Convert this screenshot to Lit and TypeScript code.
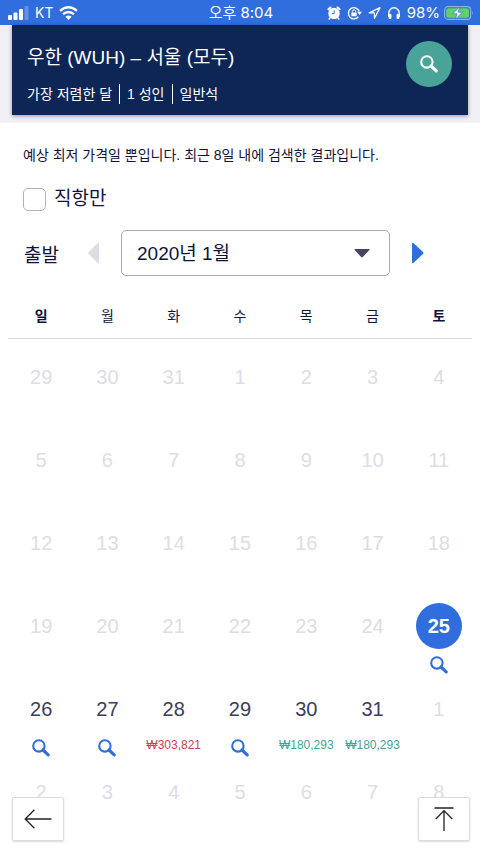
import { LitElement, html, css, nothing } from "lit";
import { customElement, property } from "lit/decorators.js";
import { classMap } from "lit/directives/class-map.js";

type Price = { text: string; level: "high" | "low" };
type Day = {
  date: number;
  state: "muted" | "open" | "selected";
  price?: Price;
  search?: boolean;
};

const WEEKDAYS = ["일", "월", "화", "수", "목", "금", "토"];

const muted = (...dates: number[]): Day[] =>
  dates.map((date) => ({ date, state: "muted" }));

const WEEKS: Day[][] = [
  muted(29, 30, 31, 1, 2, 3, 4),
  muted(5, 6, 7, 8, 9, 10, 11),
  muted(12, 13, 14, 15, 16, 17, 18),
  [...muted(19, 20, 21, 22, 23, 24), { date: 25, state: "selected", search: true }],
  [
    { date: 26, state: "open", search: true },
    { date: 27, state: "open", search: true },
    { date: 28, state: "open", price: { text: "₩303,821", level: "high" } },
    { date: 29, state: "open", search: true },
    { date: 30, state: "open", price: { text: "₩180,293", level: "low" } },
    { date: 31, state: "open", price: { text: "₩180,293", level: "low" } },
    ...muted(1),
  ],
  muted(2, 3, 4, 5, 6, 7, 8),
];

const magnifier = html`<svg class="glass" viewBox="0 0 18 18" width="18" height="18" aria-hidden="true">
  <circle cx="6.9" cy="6.9" r="5.7" fill="none" stroke="currentColor" stroke-width="2.1" />
  <path d="M11 11 L16.2 15.9" stroke="currentColor" stroke-width="3.1" stroke-linecap="round" />
</svg>`;

@customElement("status-bar")
export class StatusBar extends LitElement {
  static styles = css`
    :host {
      display: grid;
      grid-template-columns: 1fr auto 1fr;
      align-items: center;
      height: 25px;
      padding: 0 6px 0 8px;
      background: #2f6edc;
      color: #fff;
      font-family: Inter, "Noto Sans CJK KR", sans-serif;
      font-size: 15px;
      line-height: 25px;
    }
    .side {
      display: flex;
      align-items: center;
      gap: 6px;
    }
    .end {
      justify-content: flex-end;
    }
    .power {
      display: flex;
      align-items: center;
      gap: 4px;
    }
    .carrier {
      font-size: 14px;
    }
    svg {
      display: block;
      flex: none;
    }
  `;

  render() {
    return html`
      <div class="side">
        <svg width="21" height="14" viewBox="0 0 21 14" fill="#fff" aria-hidden="true">
          <rect x="0" y="9" width="4" height="5" rx="1" />
          <rect x="5.5" y="6.5" width="4" height="7.5" rx="1" />
          <rect x="11" y="3" width="4" height="11" rx="1" />
          <rect x="16.5" y="0" width="4" height="14" rx="1" opacity=".25" />
        </svg>
        <span class="carrier">KT</span>
        <svg width="19" height="14" viewBox="0 0 19 14" aria-hidden="true">
          <g fill="none" stroke="#fff" stroke-width="2.4">
            <path d="M1 4.9 Q9.5 -2.3 18 4.9" />
            <path d="M4 8.2 Q9.5 3.6 15 8.2" />
          </g>
          <path d="M9.5 14 L6.4 10.8 Q9.5 8.4 12.6 10.8 Z" fill="#fff" />
        </svg>
      </div>
      <span>오후 8:04</span>
      <div class="side end">
        <svg width="14" height="14" viewBox="0 0 14 14" aria-hidden="true">
          <g stroke="#fff" stroke-linecap="round" fill="none">
            <path d="M1.4 3.2 L3.4 1.4 M12.6 3.2 L10.6 1.4" stroke-width="2" />
            <path d="M3.4 11.6 L2.2 13 M10.6 11.6 L11.8 13" stroke-width="1.6" />
          </g>
          <circle cx="7" cy="7.4" r="5.7" fill="#fff" />
          <path d="M7.2 4.2 V7.6 H4.6" fill="none" stroke="#2f6edc" stroke-width="1" />
        </svg>
        <svg width="15" height="14" viewBox="0 0 15 14" aria-hidden="true">
          <path d="M12.3 5.4 A5.6 5.6 0 1 0 11.4 10.8" fill="none" stroke="#fff" stroke-width="1.4" />
          <path d="M10 5.8 H15 L12.6 9 Z" fill="#fff" />
          <rect x="4.3" y="6.4" width="5.4" height="3.8" rx=".6" fill="#fff" />
          <path d="M5.4 6.6 V5.4 A1.6 1.6 0 0 1 8.6 5.4 V6.6" fill="none" stroke="#fff" stroke-width="1" />
        </svg>
        <svg width="13" height="14" viewBox="0 0 13 14" aria-hidden="true">
          <path d="M12 1.6 L1.2 6.9 H6.4 V12.4 Z" fill="none" stroke="#fff" stroke-width="1.2" stroke-linejoin="round" />
        </svg>
        <svg width="14" height="14" viewBox="0 0 14 14" aria-hidden="true">
          <path d="M1.7 11 V7.4 A5.3 5.6 0 0 1 12.3 7.4 V11" fill="none" stroke="#fff" stroke-width="1.4" />
          <rect x="1.6" y="7.8" width="2.8" height="5.2" rx="1" fill="#fff" />
          <rect x="9.6" y="7.8" width="2.8" height="5.2" rx="1" fill="#fff" />
        </svg>
        <div class="power">
          <span>98%</span>
          <svg width="30" height="14" viewBox="0 0 30 14" aria-hidden="true">
            <rect x=".6" y=".6" width="26" height="12.8" rx="3.4" fill="none" stroke="#8fb2ee" stroke-width="1.1" />
            <path d="M28.2 4.8 Q29.8 7 28.2 9.2 Z" fill="#8fb2ee" />
            <rect x="2.2" y="2.2" width="22.8" height="9.6" rx="2" fill="#62d06a" />
            <path d="M15.6 .8 L8.6 7.8 H13 L11.4 13.2 L18.6 6.2 H14.2 Z" fill="#fff" stroke="#2f6edc" stroke-width=".7" />
          </svg>
        </div>
      </div>
    `;
  }
}

@customElement("trip-summary")
export class TripSummary extends LitElement {
  static styles = css`
    :host {
      display: block;
      padding: 0 12px 8px;
      background: #f0f0f6;
    }
    .card {
      display: flex;
      align-items: flex-start;
      justify-content: space-between;
      padding: 16px 16px 10px 15px;
      background: #0e2656;
      color: #fff;
      box-shadow: 0 1px 4px rgba(0, 0, 0, 0.4);
    }
    .route {
      margin: 0;
      font-size: 19px;
      font-weight: 400;
      line-height: 34px;
    }
    .facts {
      display: flex;
      align-items: center;
      margin: 8px 0 0;
      padding: 0;
      list-style: none;
      font-size: 14px;
      line-height: 22px;
    }
    .fact + .fact {
      margin-left: 7px;
      padding-left: 7px;
      border-left: 1px solid #fff;
      line-height: 20px;
    }
    .search {
      display: grid;
      place-items: center;
      width: 46px;
      height: 46px;
      padding: 0;
      border: 0;
      border-radius: 50%;
      background: #4aa399;
      color: #fff;
    }
  `;

  render() {
    return html`
      <header class="card">
        <div>
          <h1 class="route">우한 (WUH) – 서울 (모두)</h1>
          <ul class="facts">
            <li class="fact">가장 저렴한 달</li>
            <li class="fact">1 성인</li>
            <li class="fact">일반석</li>
          </ul>
        </div>
        <button class="search" aria-label="검색">${magnifier}</button>
      </header>
    `;
  }
}

@customElement("price-calendar")
export class PriceCalendar extends LitElement {
  @property({ attribute: false }) weeks: Day[][] = WEEKS;

  static styles = css`
    :host {
      display: block;
      padding: 0 8px;
    }
    .grid {
      width: 100%;
      table-layout: fixed;
      border-collapse: separate;
      border-spacing: 0;
    }
    .weekday {
      height: 45px;
      padding: 0;
      border-bottom: 1px solid #d9d9e2;
      font-size: 14px;
      font-weight: 400;
      line-height: 20px;
    }
    .weekend {
      font-weight: 700;
    }
    .weeks::before {
      content: "";
      display: block;
      height: 9px;
    }
    .cell {
      height: 83px;
      padding: 6px 0 0;
      box-sizing: border-box;
      vertical-align: top;
    }
    .day {
      display: flex;
      flex-direction: column;
      align-items: center;
      width: 100%;
      padding: 0;
      border: 0;
      background: none;
      color: #3d3d5c;
      font: inherit;
    }
    .muted {
      color: #dddde5;
    }
    .date {
      width: 46px;
      border-radius: 50%;
      font-size: 20px;
      line-height: 46px;
      text-align: center;
    }
    .selected .date {
      background: #2f6edc;
      color: #fff;
      font-weight: 700;
    }
    .glass {
      display: block;
      margin-top: 7px;
      color: #2f6edc;
    }
    .price {
      margin-top: 4px;
      font-size: 12px;
      line-height: 18px;
    }
    .high {
      color: #c94259;
    }
    .low {
      color: #41a593;
    }
  `;

  private renderDay(day: Day) {
    return html`<td class="cell">
      <button
        class=${classMap({ day: true, [day.state]: true })}
        ?disabled=${day.state === "muted"}
      >
        <span class="date">${day.date}</span>
        ${day.search ? magnifier : nothing}
        ${day.price
          ? html`<span class=${classMap({ price: true, [day.price.level]: true })}>${day.price.text}</span>`
          : nothing}
      </button>
    </td>`;
  }

  render() {
    return html`
      <table class="grid">
        <thead>
          <tr>
            ${WEEKDAYS.map(
              (name, i) =>
                html`<th scope="col" class=${classMap({ weekday: true, weekend: i % 6 === 0 })}>${name}</th>`
            )}
          </tr>
        </thead>
        <tbody class="weeks">
          ${this.weeks.map((week) => html`<tr>${week.map((day) => this.renderDay(day))}</tr>`)}
        </tbody>
      </table>
    `;
  }
}

@customElement("app-root")
export class AppRoot extends LitElement {
  static styles = css`
    :host {
      display: block;
      min-height: 100vh;
      box-sizing: border-box;
      padding-bottom: 8px;
      background: #fff;
      color: #12123a;
      font-family: "Liberation Sans", "Noto Sans CJK KR", sans-serif;
    }
    .notice {
      margin: 0;
      padding: 21px 23px 0;
      font-size: 14px;
      line-height: 22px;
    }
    .direct {
      display: flex;
      align-items: center;
      gap: 8px;
      width: fit-content;
      margin: 19px 23px 0;
      font-size: 19px;
      line-height: 28px;
    }
    .tick {
      width: 23px;
      height: 23px;
      margin: 0;
      appearance: none;
      border: 1px solid #b2b2bf;
      border-radius: 5px;
      background: #fff;
    }
    .month-row {
      display: flex;
      align-items: center;
      margin-top: 17px;
      padding: 0 56px 0 24px;
      font-size: 19px;
    }
    .label {
      flex: none;
      width: 64px;
    }
    .step {
      flex: none;
      padding: 0;
      border: 0;
      background: none;
      color: #2f6edc;
    }
    .step:disabled {
      color: #dddde5;
    }
    .step svg {
      display: block;
    }
    .picker {
      position: relative;
      flex: 1;
      margin: 0 22px;
    }
    .select {
      display: block;
      width: 100%;
      height: 46px;
      padding: 0 48px 0 15px;
      appearance: none;
      border: 1px solid #a9a9b8;
      border-radius: 5px;
      background: #fff;
      color: inherit;
      font: inherit;
    }
    .caret {
      position: absolute;
      top: 19px;
      right: 20px;
      pointer-events: none;
    }
    .calendar {
      margin-top: 17px;
    }
    .float {
      position: fixed;
      bottom: 13px;
      display: grid;
      place-items: center;
      width: 52px;
      height: 44px;
      padding: 0;
      border: 1px solid #dcdcdc;
      border-radius: 2px;
      background: #fff;
      box-shadow: 0 1px 2px rgba(0, 0, 0, 0.15);
    }
    .back {
      left: 12px;
    }
    .top {
      right: 10px;
    }
  `;

  render() {
    return html`
      <status-bar></status-bar>
      <trip-summary></trip-summary>
      <main>
        <p class="notice">예상 최저 가격일 뿐입니다. 최근 8일 내에 검색한 결과입니다.</p>
        <label class="direct"><input class="tick" type="checkbox" />직항만</label>
        <div class="month-row">
          <label class="label" for="month">출발</label>
          <button class="step" disabled aria-label="이전 달">
            <svg width="11" height="22" viewBox="0 0 11 22" aria-hidden="true">
              <path d="M11 1.4 V20.6 Q10.6 21.8 9.6 21 L.6 11.9 Q-.1 11 .6 10.1 L9.6 1 Q10.6 .2 11 1.4 Z" fill="currentColor" />
            </svg>
          </button>
          <div class="picker">
            <select class="select" id="month">
              <option>2020년 1월</option>
            </select>
            <svg class="caret" width="16" height="9" viewBox="0 0 16 9" aria-hidden="true">
              <path d="M1 0 H15 Q16 .2 15.4 1 L8.8 8 Q8 8.8 7.2 8 L.6 1 Q0 .2 1 0 Z" fill="#45455f" />
            </svg>
          </div>
          <button class="step" aria-label="다음 달">
            <svg width="12" height="22" viewBox="0 0 12 22" aria-hidden="true">
              <path d="M0 1.4 V20.6 Q.4 21.8 1.4 21 L11 11.9 Q11.8 11 11 10.1 L1.4 1 Q.4 .2 0 1.4 Z" fill="currentColor" />
            </svg>
          </button>
        </div>
        <price-calendar class="calendar"></price-calendar>
      </main>
      <button class="float back" aria-label="뒤로">
        <svg width="28" height="20" viewBox="0 0 28 20" fill="none" stroke="#222" stroke-width="1.3" aria-hidden="true">
          <path d="M27.5 10 H1.2 M10.4 .8 L1.2 10 L10.4 19.2" />
        </svg>
      </button>
      <button class="float top" aria-label="맨 위로">
        <svg width="20" height="24" viewBox="0 0 20 24" fill="none" stroke="#222" stroke-width="1.3" aria-hidden="true">
          <path d="M.5 1 H19.5 M10 24 V3.6 M1.8 12 L10 3.6 L18.2 12" />
        </svg>
      </button>
    `;
  }
}
